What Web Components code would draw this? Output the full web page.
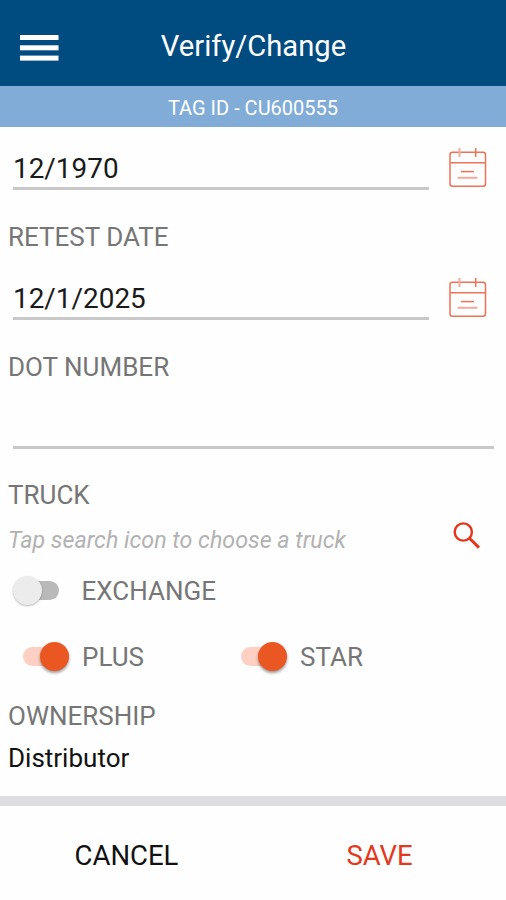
<!DOCTYPE html>
<html lang="en">
<head>
<meta charset="utf-8">
<title>Verify/Change</title>
<style>
html,body{margin:0;height:100%;background:#fefefe}
body{font-family:Roboto,"Liberation Sans",sans-serif;color:#111;overflow:hidden}
</style>
</head>
<body>
<verify-screen></verify-screen>
<script>
const define = (name, html) => {
  const template = document.createElement('template');
  template.innerHTML = html;
  customElements.define(name, class extends HTMLElement {
    constructor() {
      super();
      this.attachShadow({mode: 'open'}).append(template.content.cloneNode(true));
    }
  });
};

define('app-header', `<style>
:host{display:grid;grid-template-columns:1fr auto 1fr;align-items:center;height:86px;background:#004c80;color:#fff;box-sizing:border-box;padding:6px 0 0 20px}
svg{display:block;margin-top:3px}
h1{margin:0;font-size:29.2px;font-weight:400;line-height:40px;margin-left:-19px}
</style>
<svg width="39" height="28" fill="#fff"><rect y="1" width="38.5" height="5"/><rect y="11.3" width="38.5" height="5"/><rect y="21.6" width="38.5" height="5"/></svg>
<h1><slot></slot></h1>`);

define('tag-bar', `<style>
:host{display:block;height:41px;line-height:44px;background:#80acd7;color:#fff;font-size:20px;text-align:center}
</style><slot></slot>`);

define('form-label', `<style>
:host{display:block;box-sizing:border-box;padding:26px 0 0 8px;height:67px;line-height:42px;font-size:26px;color:#767676}
:host([compact]){padding-top:0;height:38px;line-height:38px}
</style><slot></slot>`);

define('calendar-icon', `<style>:host{display:block}svg{display:block}</style>
<svg width="40" height="42" fill="none" stroke="#ed7358" stroke-width="1.5">
<rect x="2" y="5.2" width="35.5" height="34" rx="2.5"/>
<path d="M2 15.8H37.5"/><path d="M27.7 1V10"/><path d="M11.5 1V10" stroke="#f5ab9b" stroke-width="2"/>
<path d="M13 24.6H26"/><path d="M9.5 30.8H29.5" stroke="#f5ab9b" stroke-width="2"/></svg>`);

define('text-field', `<style>
:host{display:flex;height:63px;box-sizing:border-box;padding:0 12px 0 13px}
:host([wide]){height:62px}
.value{flex:1;box-sizing:border-box;padding-top:22px;border-bottom:3px solid #c8c8c8;font-size:27.9px;line-height:39px;color:#1a1a1a}
.end{padding-top:19.5px}
::slotted(calendar-icon){margin:0 6.5px 0 18.5px}
</style><div class="value"><slot></slot></div><div class="end"><slot name="icon"></slot></div>`);

define('search-icon', `<style>:host{display:block}svg{display:block}</style>
<svg width="28" height="28" fill="none" stroke="#e5351b"><circle cx="10.3" cy="10" r="8.6" stroke-width="2.4"/><path d="M16.7 16.5L26 25.6" stroke-width="3"/></svg>`);

define('truck-picker', `<style>
:host{display:flex;justify-content:space-between;height:50px;line-height:51px;padding:0 25px 0 8px;font-size:23.25px;font-style:italic;color:#b2b2b2}
search-icon{margin-top:6.5px}
</style><slot></slot><search-icon></search-icon>`);

define('toggle-switch', `<style>
:host{display:flex;align-items:center;font-size:26px;color:#767676}
.track{display:flex;align-items:center;width:46px;height:19px;border-radius:10px;background:linear-gradient(90deg,transparent 10px,#b9b9b9 10px)}
.thumb{width:29px;height:29px;border-radius:50%;background:#ececec;box-shadow:0 1px 2px #0004;flex:none}
.text{margin-left:23px}
:host([on]) .track{background:#fdd0c3;justify-content:flex-end}
:host([on]) .thumb{background:#eb5723;box-shadow:0 2px 3px #0006}
:host([on]) .text{margin-left:13px}
</style><div class="track"><div class="thumb"></div></div><span class="text"><slot></slot></span>`);

define('action-bar', `<style>
:host{display:grid;grid-template-columns:1fr 1fr;height:94px;border-top:10px solid #dcdee1;font-size:27.5px;text-align:center;line-height:99px}
::slotted([primary]){color:#e23a1e}
</style><slot></slot>`);

define('verify-screen', `<style>
:host{display:flex;flex-direction:column;height:900px;background:#fefefe}
.row{display:flex;align-items:center}
.exchange{height:51px;padding-left:12.5px}
.options{height:81px;padding-left:23px}
.options toggle-switch{width:218px}
.truck{height:66px;line-height:40px}
.owner{height:46px;line-height:46px;padding-left:8px;font-size:26px;color:#111;margin-bottom:15px}
</style>
<app-header>Verify/Change</app-header>
<tag-bar>TAG ID - CU600555</tag-bar>
<text-field>12/1970<calendar-icon slot="icon"></calendar-icon></text-field>
<form-label>RETEST DATE</form-label>
<text-field>12/1/2025<calendar-icon slot="icon"></calendar-icon></text-field>
<form-label>DOT NUMBER</form-label>
<text-field wide></text-field>
<form-label class="truck">TRUCK</form-label>
<truck-picker>Tap search icon to choose a truck</truck-picker>
<div class="row exchange"><toggle-switch>EXCHANGE</toggle-switch></div>
<div class="row options"><toggle-switch on>PLUS</toggle-switch><toggle-switch on>STAR</toggle-switch></div>
<form-label compact>OWNERSHIP</form-label>
<div class="owner">Distributor</div>
<action-bar><span>CANCEL</span><span primary>SAVE</span></action-bar>`);
</script>
</body>
</html>
